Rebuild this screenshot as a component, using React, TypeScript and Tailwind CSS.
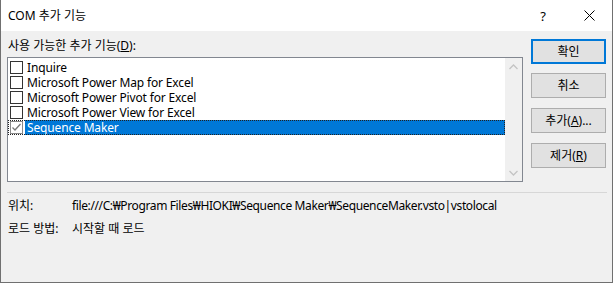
import React from "react";

const items = [
  { label: "Inquire", checked: false },
  { label: "Microsoft Power Map for Excel", checked: false },
  { label: "Microsoft Power Pivot for Excel", checked: false },
  { label: "Microsoft Power View for Excel", checked: false },
  { label: "Sequence Maker", checked: true, selected: true },
];

function Btn({ children, def, className = "" }: { children: React.ReactNode; def?: boolean; className?: string }) {
  return (
    <div
      className={
        "h-[25px] w-[75px] flex items-center justify-center bg-[#e1e1e1] " +
        (def ? "border-2 border-[#0078d7] " : "border border-[#adadad] ") +
        className
      }
    >
      {children}
    </div>
  );
}

export default function App() {
  return (
    <div className="w-[613px] h-[283px] bg-[#f0f0f0] border-x border-b border-[#707070] flex flex-col text-[12px] leading-[16px] text-black font-['Noto_Sans','Noto_Sans_CJK_KR',sans-serif]">
      {/* title bar */}
      <div className="h-[31px] bg-white flex items-center">
        <span className="pl-[7px]">COM 추가 기능</span>
        <div className="ml-auto flex h-full">
          <div className="w-[46px] flex items-center justify-center text-[13px]">?</div>
          <div className="w-[46px] flex items-center justify-center">
            <svg width="11" height="11" viewBox="0 0 11 11">
              <path d="M0.5 0.5 L10.5 10.5 M10.5 0.5 L0.5 10.5" stroke="#000" strokeWidth="1" fill="none" />
            </svg>
          </div>
        </div>
      </div>

      {/* body */}
      <div className="flex pl-[6px] pr-[6px]">
        <div className="w-[516px] pt-[7px] flex flex-col">
          <div className="h-[16px] pl-[1px]">
            사용 가능한 추가 기능(<span className="underline">D</span>):
          </div>
          <div className="mt-[3px] h-[125px] border border-[#828790] bg-white flex">
            <div className="flex-1 pt-[2px] flex flex-col">
              {items.map((it) => (
                <div
                  key={it.label}
                  className={
                    "h-[15px] leading-[15px] flex items-center " +
                    (it.selected ? "outline-1 outline-dotted outline-[#222] -outline-offset-1" : "")
                  }
                >
                  <div
                    className={
                      "ml-[2px] w-[13px] h-[13px] bg-white border flex items-center justify-center " +
                      (it.checked ? "border-[#8a8a8a]" : "border-[#333333]")
                    }
                  >
                    {it.checked && (
                      <svg width="11" height="11" viewBox="0 0 11 11">
                        <path d="M1.5 5.5 L4 8 L9.5 2" stroke="#777" strokeWidth="1.3" fill="none" />
                      </svg>
                    )}
                  </div>
                  <div
                    className={
                      "ml-[2px] flex-1 h-full pl-[2px] flex items-center whitespace-nowrap tracking-[-0.15px] " +
                      (it.selected ? "bg-[#0078d7] text-white" : "")
                    }
                  >
                    {it.label}
                  </div>
                </div>
              ))}
            </div>
            <div className="w-[17px] bg-[#f0f0f0] flex flex-col justify-between items-center">
              <div className="h-[17px] flex items-center justify-center">
                <svg width="9" height="6" viewBox="0 0 9 6">
                  <path d="M0.5 5 L4.5 1 L8.5 5" stroke="#c4c4c4" strokeWidth="1.3" fill="none" />
                </svg>
              </div>
              <div className="h-[17px] flex items-center justify-center">
                <svg width="9" height="6" viewBox="0 0 9 6">
                  <path d="M0.5 1 L4.5 5 L8.5 1" stroke="#c4c4c4" strokeWidth="1.3" fill="none" />
                </svg>
              </div>
            </div>
          </div>
        </div>

        <div className="ml-[8px] pt-[8px] flex flex-col">
          <Btn def>확인</Btn>
          <Btn className="mt-[9px]">취소</Btn>
          <Btn className="mt-[10px]">
            추가(<span className="underline">A</span>)...
          </Btn>
          <Btn className="mt-[10px]">
            제거(<span className="underline">R</span>)
          </Btn>
        </div>
      </div>

      <div className="mt-[10px] ml-[6px] mr-[5px] h-px bg-[#d7d7d7]" />

      <div className="pl-[7px] mt-[5px] flex">
        <div className="w-[64px]">위치:</div>
        <div className="whitespace-nowrap tracking-[-0.38px]">file:///C:₩Program Files₩HIOKI₩Sequence Maker₩SequenceMaker.vsto|vstolocal</div>
      </div>
      <div className="pl-[7px] mt-[7px] flex">
        <div className="w-[64px]">로드 방법:</div>
        <div>시작할 때 로드</div>
      </div>
    </div>
  );
}
